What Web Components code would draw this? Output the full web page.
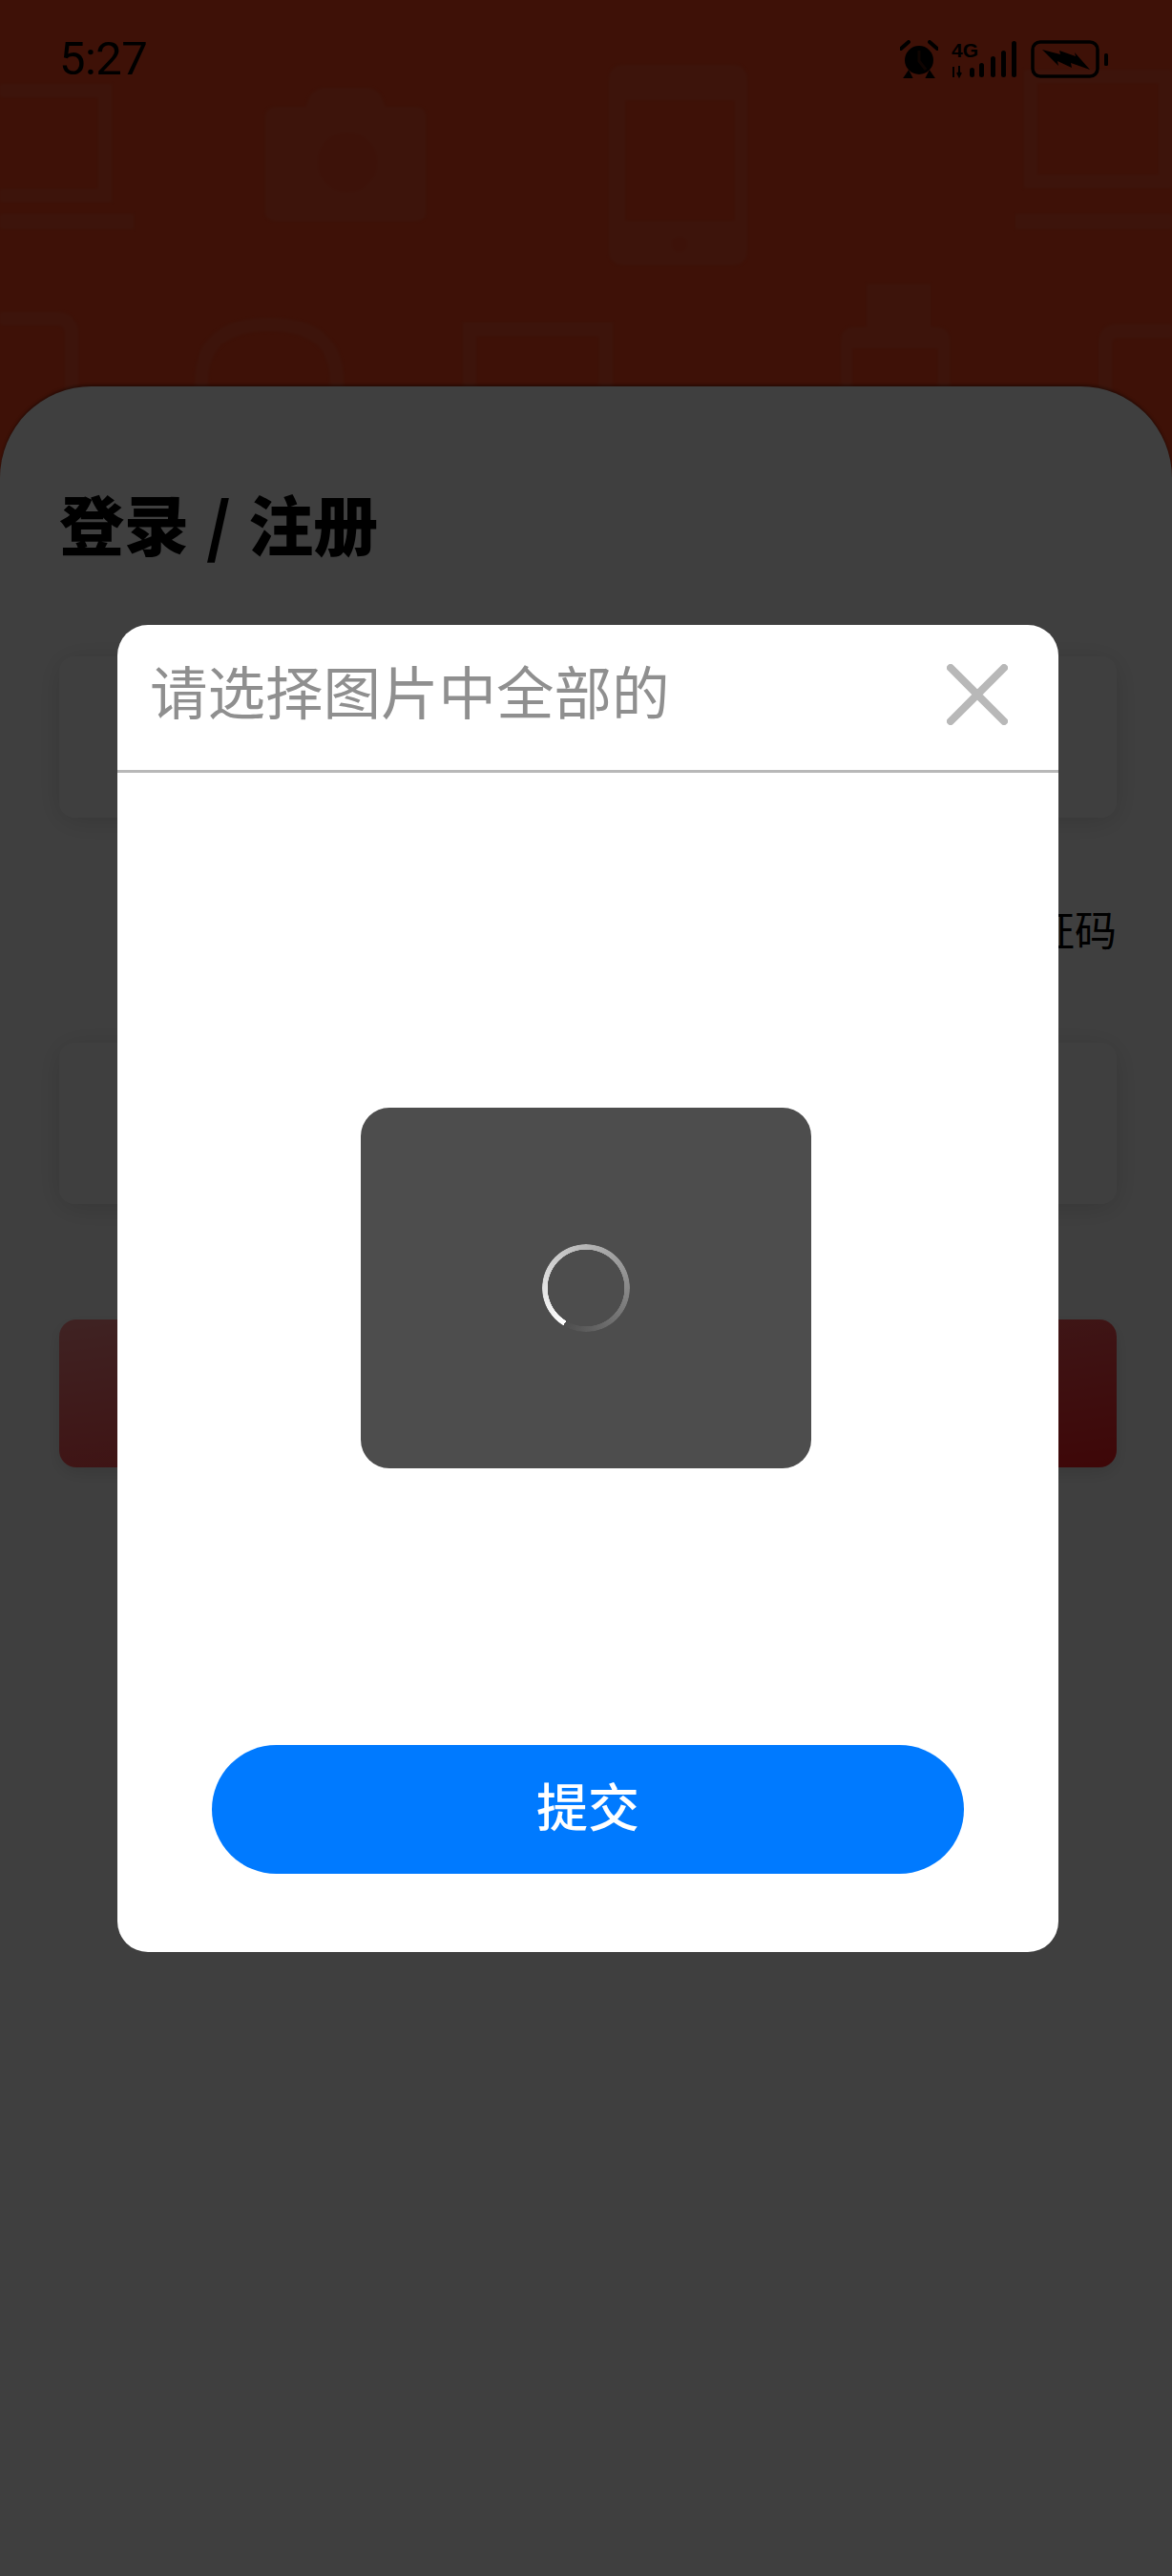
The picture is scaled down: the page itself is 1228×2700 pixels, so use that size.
<!DOCTYPE html>
<html lang="zh">
<head>
<meta charset="utf-8">
<title>登录</title>
<style>
  html, body { margin: 0; padding: 0; background: #404040; }
  body { font-family: "Noto Sans CJK SC", "Noto Sans", sans-serif; }
</style>
</head>
<body>
<login-page>
  <status-bar slot="status" time="5:27"></status-bar>
  <login-sheet slot="sheet" heading="登录 / 注册"></login-sheet>
  <captcha-dialog slot="dialog" heading="请选择图片中全部的">
    <loading-box></loading-box>
    <pill-button slot="action">提交</pill-button>
  </captcha-dialog>
</login-page>

<script>
class LoginPage extends HTMLElement {
  constructor() {
    super();
    this.attachShadow({ mode: "open" });
    this.shadowRoot.innerHTML = `
      <style>
        :host { display: block; position: relative; height: 2700px; overflow: hidden; background: #f8441c; }
        .pattern { position: absolute; left: 0; top: 0; width: 1228px; height: 420px; filter: blur(1.5px); }
        .stack { position: relative; display: flex; flex-direction: column; height: 100%; }
        .spacer { height: 305px; flex: none; }
        .sheet { flex: 1; display: flex; flex-direction: column; }
        ::slotted(login-sheet) { flex: 1; }
        .mask {
          position: absolute; inset: 0;
          background: rgba(0, 0, 0, .752);
          display: flex; align-items: center;
          padding: 0 119px 0 123px;
        }
      </style>
      <svg class="pattern" viewBox="0 0 1228 420" fill="none" stroke="#f4532f" stroke-width="14">
        <!-- 背景の薄いアイコン -->
        <path d="M-10 95H110V205H-10"/>
        <path d="M-10 232H140" stroke-width="16"/>
        <path fill="#f4532f" stroke="none" d="M290 112H321Q326 92 340 92H385Q398 92 403 112H436Q446 112 446 124V220Q446 232 436 232H290Q278 232 278 220V124Q278 112 290 112Z"/>
        <circle cx="364" cy="170" r="36" fill="#f64a26" stroke="#f4532f" stroke-width="8"/>
        <path fill="#f4532f" stroke="none" fill-rule="evenodd" d="M654 68H767Q783 68 783 84V262Q783 278 767 278H654Q638 278 638 262V84Q638 68 654 68ZM655 105V232H770V105Z"/>
        <circle cx="712" cy="256" r="9" fill="#f64a26" stroke="none"/>
        <path d="M1080 80H1221V190H1080Z"/>
        <path d="M1064 232H1228" stroke-width="16"/>
        <rect x="-20" y="334" width="95" height="120" rx="14"/>
        <path d="M211 420V400Q211 340 282 340Q353 340 353 400V420"/>
        <path d="M492 420V345H635V420"/>
        <path fill="#f4532f" stroke="none" fill-rule="evenodd" d="M908 298H975V343H980Q995 343 995 358V420H881V358Q881 343 896 343H908ZM893 365V420H983V365Z"/>
        <path d="M1158 420V360Q1158 347 1171 347H1240"/>
      </svg>
      <div class="stack">
        <slot name="status"></slot>
        <div class="spacer"></div>
        <div class="sheet"><slot name="sheet"></slot></div>
      </div>
      <div class="mask"><slot name="dialog"></slot></div>
    `;
  }
}

class StatusBar extends HTMLElement {
  constructor() {
    super();
    this.attachShadow({ mode: "open" });
    this.shadowRoot.innerHTML = `
      <style>
        :host {
          display: flex; align-items: center; justify-content: space-between;
          box-sizing: border-box; height: 100px;
          padding: 24px 66px 0 62px;
          color: #000; position: relative;
        }
        .time { font: 400 49px/76px Roboto, "Liberation Sans", sans-serif; letter-spacing: -.6px; }
        .icons { display: flex; align-items: center; gap: 14px; }
        .net { position: relative; width: 69px; height: 40px; }
        .net span { position: absolute; left: 0; top: 1px; font: 700 21px/20px "Liberation Sans", sans-serif; }
        svg { display: block; }
      </style>
      <span class="time"></span>
      <div class="icons">
        <svg width="40" height="40" viewBox="0 0 40 40">
          <circle cx="20" cy="21" r="15" fill="#000"/>
          <path d="M20 11V22L27 31" stroke="#3e1107" stroke-width="3" fill="none"/>
          <path d="M1 9L9 2M39 9L31 2" stroke="#000" stroke-width="4" stroke-linecap="round"/>
          <path d="M9 33L5 39H12ZM31 33L35 39H28Z" fill="#000" stroke="#000" stroke-width="2"/>
        </svg>
        <div class="net">
          <span>4G</span>
          <svg width="69" height="40" viewBox="0 0 69 40">
            <path d="M2 28V39M6 34L8 38L10 34M8 27V38" stroke="#000" stroke-width="2" fill="none"/>
            <g fill="#000">
              <rect x="19" y="29" width="5" height="10" rx="2.5"/>
              <rect x="29" y="24" width="5" height="15" rx="2.5"/>
              <rect x="41" y="17" width="5" height="22" rx="2.5"/>
              <rect x="52" y="11" width="5" height="28" rx="2.5"/>
              <rect x="63" y="1" width="5" height="38" rx="2.5"/>
            </g>
          </svg>
        </div>
        <svg width="82" height="40" viewBox="0 0 82 40">
          <rect x="2" y="2" width="68" height="36" rx="8" fill="none" stroke="#000" stroke-width="3.5"/>
          <path d="M12 10L31 15L30 11L47 17L46 13L62 31L42 24L43 29L28 22L29 27Z" fill="#000"/>
          <rect x="77" y="14" width="4" height="13" rx="1.5" fill="#000"/>
        </svg>
      </div>
    `;
    this.shadowRoot.querySelector(".time").textContent = this.getAttribute("time");
  }
}

class LoginSheet extends HTMLElement {
  constructor() {
    super();
    this.attachShadow({ mode: "open" });
    this.shadowRoot.innerHTML = `
      <style>
        :host {
          display: block; box-sizing: border-box;
          background: #fff; border-radius: 96px 96px 0 0;
          padding: 98px 58px 0 62px;
          box-shadow: 0 -2px 3px rgba(0, 0, 0, .35);
        }
        h1 { margin: 0; font: 900 68px/90px "Noto Sans CJK SC", sans-serif; word-spacing: 2.5px; color: #000; }
        .field {
          height: 169px; border-radius: 16px; background: #fff;
          box-shadow: 0 4px 30px rgba(0, 0, 0, .15);
        }
        .first { margin-top: 95px; }
        .code { margin: 86px 0 90px; text-align: right; font: 400 44px/60px "Noto Sans CJK SC", sans-serif; color: #000; }
        .submit {
          height: 155px; margin-top: 121px; border-radius: 18px;
          background: linear-gradient(to bottom right, #ff8c8c, #f81c20);
          box-shadow: 0 6px 18px rgba(0, 0, 0, .12);
        }
      </style>
      <h1></h1>
      <div class="field first"></div>
      <div class="code">验证码</div>
      <div class="field"></div>
      <div class="submit"></div>
    `;
    this.shadowRoot.querySelector("h1").textContent = this.getAttribute("heading");
  }
}

class CaptchaDialog extends HTMLElement {
  constructor() {
    super();
    this.attachShadow({ mode: "open" });
    this.shadowRoot.innerHTML = `
      <style>
        :host {
          display: flex; flex-direction: column; flex: 1;
          background: #fff; border-radius: 32px; overflow: hidden;
        }
        header {
          display: flex; align-items: center; justify-content: space-between;
          box-sizing: border-box; height: 155px;
          padding: 0 53px 0 34px;
          border-bottom: 3px solid #b8b8b8;
        }
        h2 { margin: 0 0 16px; font: 400 60.5px/80px "Noto Sans CJK SC", sans-serif; color: #8f8f8f; }
        svg { display: block; margin-bottom: 5px; }
        .body { display: flex; flex-direction: column; align-items: center; padding: 351px 0 82px; }
        .footer { margin-top: 290px; align-self: stretch; display: flex; padding: 0 99px; }
      </style>
      <header>
        <h2></h2>
        <svg width="64" height="64" viewBox="0 0 64 64">
          <path d="M4 4L60 60M60 4L4 60" stroke="#b8b8b8" stroke-width="8" stroke-linecap="round"/>
        </svg>
      </header>
      <div class="body">
        <slot></slot>
        <div class="footer"><slot name="action"></slot></div>
      </div>
    `;
    this.shadowRoot.querySelector("h2").textContent = this.getAttribute("heading");
  }
}

class LoadingBox extends HTMLElement {
  constructor() {
    super();
    this.attachShadow({ mode: "open" });
    this.shadowRoot.innerHTML = `
      <style>
        :host {
          display: flex; align-items: center; justify-content: center;
          width: 472px; height: 378px; margin-right: 5px;
          background: #4d4d4d; border-radius: 30px;
        }
        .spin {
          width: 92px; height: 92px; border-radius: 50%;
          background: conic-gradient(from 211deg, #fff, #4d4d4d);
          -webkit-mask: radial-gradient(closest-side, transparent 40px, #000 40.5px);
          mask: radial-gradient(closest-side, transparent 40px, #000 40.5px);
        }
      </style>
      <div class="spin"></div>
    `;
  }
}

class PillButton extends HTMLElement {
  constructor() {
    super();
    this.attachShadow({ mode: "open" });
    this.shadowRoot.innerHTML = `
      <style>
        :host {
          display: flex; align-items: center; justify-content: center; flex: 1;
          height: 135px; border-radius: 68px; box-sizing: border-box; padding-bottom: 8px;
          background: #007aff; color: #fff;
          font: 500 54px/1 "Noto Sans CJK SC", sans-serif;
        }
      </style>
      <slot></slot>
    `;
  }
}

customElements.define("login-page", LoginPage);
customElements.define("status-bar", StatusBar);
customElements.define("login-sheet", LoginSheet);
customElements.define("captcha-dialog", CaptchaDialog);
customElements.define("loading-box", LoadingBox);
customElements.define("pill-button", PillButton);
</script>
</body>
</html>
